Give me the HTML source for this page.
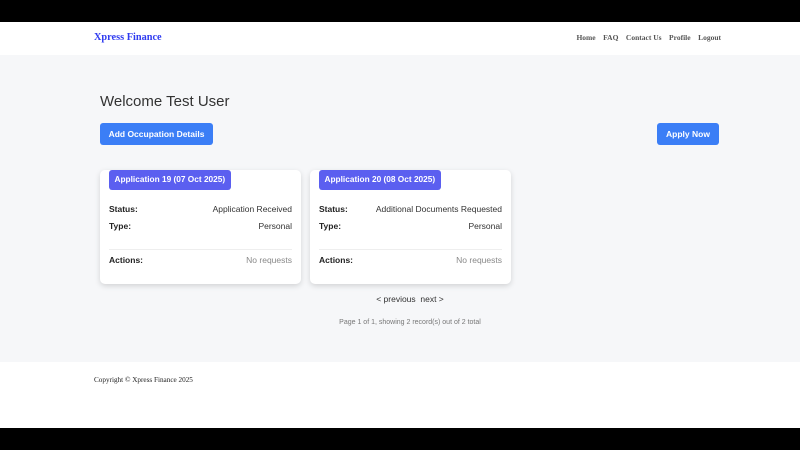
<!DOCTYPE html>
<html><head><style>
*{box-sizing:border-box;margin:0;padding:0}
body{width:800px;height:450px;background:#000;font-family:"Liberation Sans",sans-serif;position:relative;overflow:hidden}
.hdr{position:absolute;top:22px;left:0;width:800px;height:33px;background:#fff}
.logo{position:absolute;left:94px;top:10px;font-family:"Liberation Serif",serif;font-weight:bold;font-size:10.3px;color:#2f3bf0}
.nav{position:absolute;right:79px;top:11px;font-family:"Liberation Serif",serif;font-size:7.5px;font-weight:bold;color:#555}
.nav span{margin-left:7.5px}
.main{position:absolute;top:55px;left:0;width:800px;height:307px;background:#f6f7f9}
h1{position:absolute;left:100px;top:38px;font-size:15px;font-weight:normal;color:#333}
.btn{position:absolute;background:#3b7ef6;color:#fff;font-size:8.5px;font-weight:bold;border-radius:3px;text-align:center;line-height:22px;height:22px}
.card{position:absolute;top:115px;width:201px;height:114px;background:#fff;border-radius:5px;box-shadow:0 2px 6px rgba(0,0,0,.15)}
.badge{position:absolute;left:9px;top:0;height:20px;background:#5b5ff0;color:#fff;font-size:8.3px;font-weight:bold;line-height:19px;padding:0 5.5px;border-radius:3px}
.row{position:absolute;left:9px;right:9px;font-size:8.5px;color:#333}
.row b{color:#222}
.row span{float:right}
.hr{position:absolute;left:9px;right:9px;top:79px;border-top:1px solid #eee}
.pg{position:absolute;left:310px;width:200px;text-align:center;color:#333}
.foot{position:absolute;top:362px;left:0;width:800px;height:66px;background:#fff}
.foot div{position:absolute;left:94px;top:14px;font-family:"Liberation Serif",serif;font-size:7.2px;color:#222}
</style></head><body>
<div class="hdr"><div class="logo">Xpress Finance</div>
<div class="nav"><span>Home</span><span>FAQ</span><span>Contact Us</span><span>Profile</span><span>Logout</span></div></div>
<div class="main">
<h1>Welcome Test User</h1>
<div class="btn" style="left:100px;top:68px;width:113px">Add Occupation Details</div>
<div class="btn" style="left:657px;top:68px;width:62px">Apply Now</div>
<div class="card" style="left:100px"><div class="badge">Application 19 (07 Oct 2025)</div>
<div class="row" style="top:34px"><b>Status:</b><span>Application Received</span></div>
<div class="row" style="top:51px"><b>Type:</b><span>Personal</span></div>
<div class="hr"></div>
<div class="row" style="top:85px"><b>Actions:</b><span style="color:#888">No requests</span></div></div>
<div class="card" style="left:310px"><div class="badge">Application 20 (08 Oct 2025)</div>
<div class="row" style="top:34px"><b>Status:</b><span>Additional Documents Requested</span></div>
<div class="row" style="top:51px"><b>Type:</b><span>Personal</span></div>
<div class="hr"></div>
<div class="row" style="top:85px"><b>Actions:</b><span style="color:#888">No requests</span></div></div>
<div class="pg" style="top:239px;font-size:8.5px">&lt; previous &nbsp;next &gt;</div>
<div class="pg" style="top:264px;font-size:7px;color:#777">Page 1 of 1, showing 2 record(s) out of 2 total</div>
</div>
<div class="foot"><div>Copyright © Xpress Finance 2025</div></div>
</body></html>
